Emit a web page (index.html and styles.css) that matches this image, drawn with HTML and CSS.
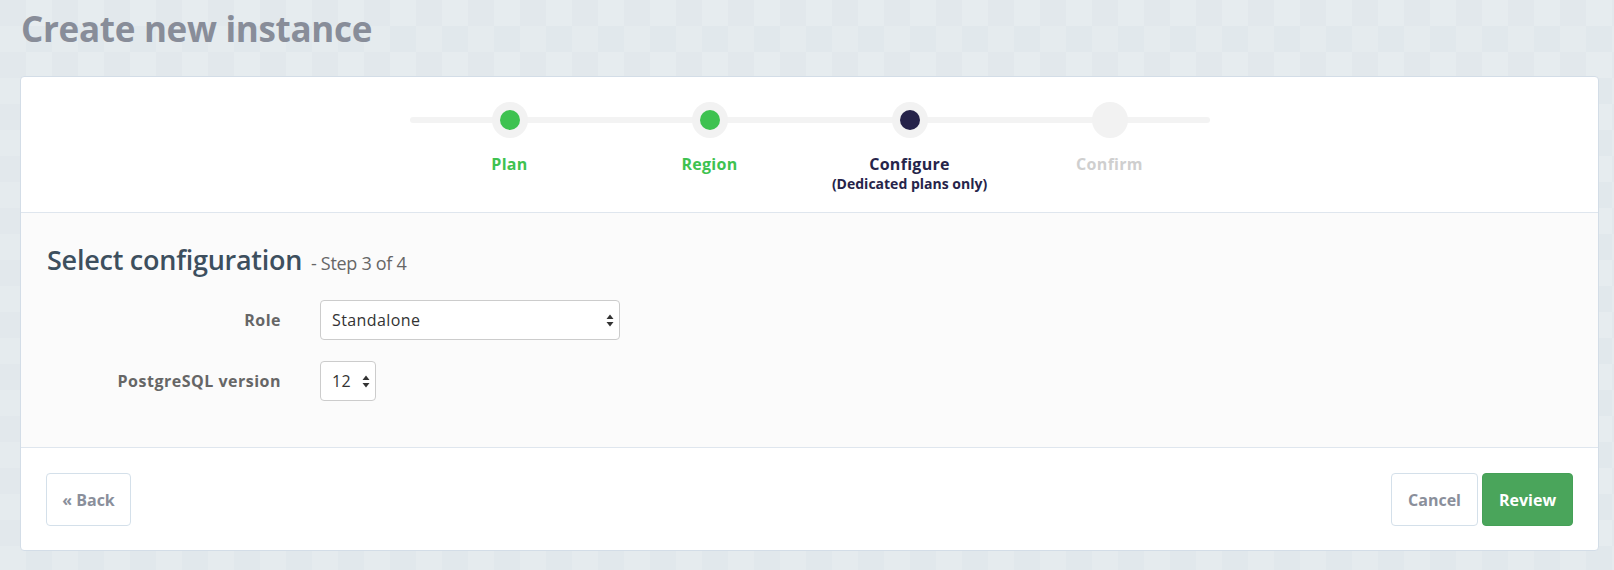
FILE: index.html
```html
<!DOCTYPE html>
<html lang="en">
<head>
<meta charset="utf-8">
<title>Create new instance</title>
<link rel="stylesheet" href="styles.css">
</head>
<body>
<div class="page">
  <h1 class="page-title">Create new instance</h1>
  <div class="card">
    <div class="steps-section">
      <ol class="stepper">
        <li class="step done">
          <span class="dot"><span class="dot-inner"></span></span>
          <span class="step-label">Plan</span>
        </li>
        <li class="step done">
          <span class="dot"><span class="dot-inner"></span></span>
          <span class="step-label">Region</span>
        </li>
        <li class="step current">
          <span class="dot"><span class="dot-inner"></span></span>
          <span class="step-label">Configure</span>
          <span class="step-sub">(Dedicated plans only)</span>
        </li>
        <li class="step todo">
          <span class="dot"><span class="dot-inner"></span></span>
          <span class="step-label">Confirm</span>
        </li>
      </ol>
    </div>
    <div class="config-section">
      <h2 class="section-title">Select configuration <small class="step-count">- Step 3 of 4</small></h2>
      <div class="form-row">
        <label class="form-label" for="role">Role</label>
        <div class="select-wrap select-wide">
          <select id="role" class="select"><option>Standalone</option></select>
          <svg class="select-arrows" width="8" height="13" viewBox="0 0 8 13"><path d="M4 0.5 L7.5 5 L0.5 5 Z M4 12.5 L7.5 8 L0.5 8 Z" fill="#333"/></svg>
        </div>
      </div>
      <div class="form-row">
        <label class="form-label" for="ver">PostgreSQL version</label>
        <div class="select-wrap select-narrow">
          <select id="ver" class="select"><option>12</option></select>
          <svg class="select-arrows" width="8" height="13" viewBox="0 0 8 13"><path d="M4 0.5 L7.5 5 L0.5 5 Z M4 12.5 L7.5 8 L0.5 8 Z" fill="#333"/></svg>
        </div>
      </div>
    </div>
    <div class="footer-section">
      <button class="btn btn-default btn-back">« Back</button>
      <div class="footer-right">
        <button class="btn btn-default btn-cancel">Cancel</button>
        <button class="btn btn-success btn-review">Review</button>
      </div>
    </div>
  </div>
</div>
</body>
</html>
```
FILE: styles.css
```css
* { box-sizing: border-box; }

html, body {
  margin: 0;
  padding: 0;
}

body {
  font-family: "Open Sans", "Noto Sans", "Liberation Sans", sans-serif;
  background-color: #e3e9ed;
  background-image: conic-gradient(#e6ecef 25%, #e1e8ec 0 50%, #e5ebee 0 75%, #e2e8ec 0);
  background-size: 52px 52px;
  min-height: 570px;
}

.page {
  padding: 0 15px 0 20px;
}

.page-title {
  margin: 7px 0 25px 1px;
  font-size: 35px;
  line-height: 44px;
  font-weight: 700;
  color: #888d99;
  letter-spacing: -0.3px;
}

.card {
  background: #fff;
  border: 1px solid #d3dde7;
  border-radius: 4px;
  overflow: hidden;
}

/* Stepper */
.steps-section {
  padding: 25px 0 18px;
  border-bottom: 1px solid #dfe6ee;
}

.stepper {
  list-style: none;
  margin: 0 auto;
  padding: 0;
  width: 800px;
  display: grid;
  grid-template-columns: repeat(4, 1fr);
  position: relative;
}

.stepper::before {
  content: "";
  position: absolute;
  left: 0;
  right: 0;
  top: 15px;
  height: 6px;
  border-radius: 3px;
  background: #f3f3f3;
}

.step {
  display: flex;
  flex-direction: column;
  align-items: center;
  position: relative;
}

.dot {
  width: 36px;
  height: 36px;
  border-radius: 50%;
  background: #f2f2f2;
  display: flex;
  align-items: center;
  justify-content: center;
}

.dot-inner {
  width: 20px;
  height: 20px;
  border-radius: 50%;
}

.done .dot-inner { background: #3ec250; }
.current .dot-inner { background: #26234a; }
.todo .dot-inner { background: transparent; }

.step-label {
  margin-top: 16px;
  font-size: 16px;
  line-height: 20px;
  font-weight: 700;
  letter-spacing: 0.3px;
}

.done .step-label { color: #3ec250; }
.current .step-label { color: #26244a; }
.todo .step-label { color: #cfcfcf; }

.step-sub {
  font-size: 14px;
  line-height: 20px;
  font-weight: 700;
  color: #26244a;
}

/* Config section */
.config-section {
  background: #fbfbfb;
  padding: 30px 26px 46px;
  border-bottom: 1px solid #dfe6ee;
}

.section-title {
  margin: 0 0 20px;
  font-size: 27px;
  line-height: 34px;
  font-weight: 600;
  color: #3d4f5e;
  letter-spacing: -0.25px;
}

.step-count {
  font-size: 18px;
  font-weight: 400;
  color: #666;
  letter-spacing: -0.3px;
  margin-left: 2px;
}

.form-row {
  display: flex;
  align-items: center;
  margin-bottom: 21px;
}

.form-row:last-child { margin-bottom: 0; }

.form-label {
  width: 234px;
  flex: none;
  text-align: right;
  font-size: 16px;
  font-weight: 700;
  color: #666;
  margin-right: 39px;
  letter-spacing: 0.5px;
}

.select-wrap {
  position: relative;
  height: 40px;
}

.select-wide { width: 300px; }
.select-narrow { width: 56px; }

.select {
  appearance: none;
  -webkit-appearance: none;
  width: 100%;
  height: 100%;
  border: 1px solid #cccccc;
  border-radius: 4px;
  background: #fff;
  padding: 0 10px 0 11px;
  font-family: inherit;
  font-size: 16px;
  letter-spacing: 0.4px;
  color: #333;
}

.select-arrows {
  position: absolute;
  right: 6px;
  top: 14px;
}

/* Footer */
.footer-section {
  display: flex;
  justify-content: space-between;
  align-items: flex-start;
  padding: 25px 25px 24px 25px;
}

.footer-right {
  display: flex;
  gap: 4px;
}

.btn {
  height: 53px;
  border-radius: 4px;
  font-family: inherit;
  font-size: 16px;
  font-weight: 700;
  padding: 0;
}

.btn-default {
  background: #fff;
  border: 1px solid #d4e0ea;
  color: #8a8f9b;
}

.btn-success {
  background: #4aa55b;
  border: 1px solid #45a057;
  color: #fff;
}

.btn-back { width: 85px; }
.btn-cancel { width: 87px; }
.btn-review { width: 91px; }
```
